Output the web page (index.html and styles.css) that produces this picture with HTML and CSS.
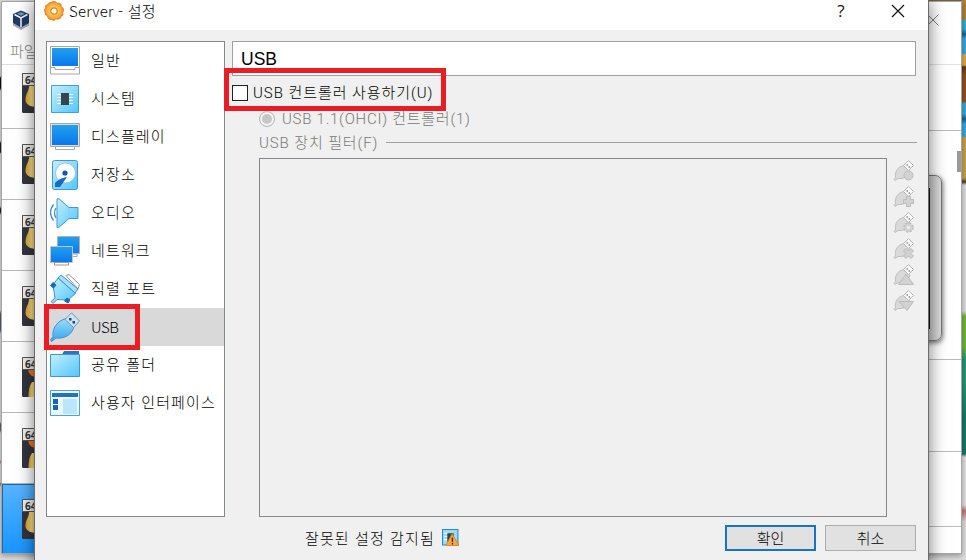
FILE: index.html
```html
<!DOCTYPE html>
<html lang="ko">
<head>
<meta charset="utf-8">
<title>Server - 설정</title>
<link rel="stylesheet" href="styles.css">
</head>
<body>
<svg class="defs" width="0" height="0">
  <defs>
    <linearGradient id="screen" x1="0" y1="0" x2="0" y2="1"><stop stop-color="#22a0ec"/><stop offset="1" stop-color="#0878ec"/></linearGradient>
    <linearGradient id="sky" x1="0" y1="0" x2="1" y2="1"><stop stop-color="#c4efff"/><stop offset="1" stop-color="#52c6fb"/></linearGradient>
    <linearGradient id="deep" x1="0" y1="0" x2="0" y2="1"><stop stop-color="#9cdcfa"/><stop offset="1" stop-color="#35a5ef"/></linearGradient>
    <linearGradient id="gold" x1="0" y1="0" x2="1" y2="0"><stop stop-color="#dca030"/><stop offset=".5" stop-color="#fbdf85"/><stop offset="1" stop-color="#efc04e"/></linearGradient>
    <radialGradient id="gear"><stop stop-color="#ffe98a"/><stop offset=".7" stop-color="#fbb03c"/><stop offset="1" stop-color="#ea8024"/></radialGradient>
    <symbol id="vm" viewBox="0 0 40 40">
      <rect width="40" height="40" rx="1.5" fill="#33363f"/><path d="M.5 12.500V.5H40v12z" fill="#f2f2f2" stroke="#555"/>
      <path d="M7 13c0 5-3 7-3.500 13-.5 5 4 8 12 8V13z" fill="url(#gold)"/>
    </symbol>
    <symbol id="vm2" viewBox="0 0 40 40">
      <rect width="40" height="40" rx="1.500" fill="#33363f"/><path d="M.5 12.500V.5H40v12z" fill="#f2f2f2" stroke="#555"/>
      <path d="M6.500 13c0 4 3 7 8 7v-7z" fill="#ee7426"/><path d="M14 25h-4c-3 4-3.500 9-3.500 15H14z" fill="url(#gold)"/>
    </symbol>
    <symbol id="plug" viewBox="0 0 22 22">
      <path d="M1 19.500l1.500-2C1.500 11.500 5 6.500 11 5.500l6 6c-2 5-6 7.500-12 7l-3 2z" fill="#d9d9d9" stroke="#bfbfbf"/>
      <path d="M10.500 5.500l5-5 5 5-5 5z" fill="#fafafa" stroke="#b5b5b5"/><path d="M13.500 5h1.500M15.500 7H17" stroke="#888" stroke-width="1.300"/>
    </symbol>
  </defs>
</svg>

<div class="desktop">
  <div class="manager">
    <div class="manager-left">
      <div class="manager-head">
        <svg class="cube" viewBox="0 0 18 20"><path d="M1 4l8-3.500L17 4v9.500L9 19.500 1 13.500z" fill="#1d3b66"/><path d="M1 13l8 4.500 8-4.500v2.500L9 20l-8-4.500z" fill="#a9adb8"/><path d="M2.500 4.500L9 8l6.500-3.500M9 8v9" fill="none" stroke="#f3f7fb" stroke-width="1.500"/><path d="M5 3.800l4-1.700 4 1.700-4 2z" fill="#7192b9"/></svg>
        <span class="menu">파일</span>
      </div>
      <div class="vm-row first"><svg><use href="#vm"/></svg><b>64</b></div>
      <div class="vm-row"><svg><use href="#vm"/></svg><b>64</b></div>
      <div class="vm-row"><svg><use href="#vm"/></svg><b>64</b></div>
      <div class="vm-row"><svg><use href="#vm"/></svg><b>64</b></div>
      <div class="vm-row"><svg><use href="#vm2"/></svg><b>64</b></div>
      <div class="vm-row"><svg><use href="#vm2"/></svg><b>64</b></div>
      <div class="vm-row selected"><svg><use href="#vm"/></svg><b>64</b></div>
    </div>
    <div class="manager-right">
      <div class="pane caption"><svg viewBox="0 0 12 12"><path d="M.5.5l11 11M11.500.5l-11 11" stroke="#808080" fill="none"/></svg></div>
      <div class="pane tools"></div>
      <div class="pane preview"><div class="thumb"></div><div class="monitor"><i></i></div></div>
      <div class="pane info"></div>
      <div class="pane info2"></div>
      <div class="pane last"></div>
    </div>
  </div>

  <div class="dialog">
    <header class="titlebar">
      <svg class="gear" viewBox="0 0 20 20"><path d="M8 1l2-.7 2 .7 1 1.200 2.500-.2 1.500 1.500.2 2L19 7l.8 2.500-1 2 .2 2.500-2 1.500-.8 2-2.500.7-2-.1L10 19.700l-2-1.200-2.500.1L4 17l-.5-2L1.200 13.500 1 11 .2 9l1.300-2 .3-2.500L4 3.200l1.200-1.500z" fill="url(#gear)" stroke="#e0822c" stroke-width=".8"/><circle cx="10" cy="10" r="3.200" fill="#fff4dc" stroke="#d98224" stroke-width="1.200"/></svg>
      <span class="title">Server - 설정</span>
      <span class="help">?</span>
      <svg class="close" viewBox="0 0 14 14"><path d="M1 1l12 12M13 1L1 13" stroke="#111" stroke-width="1.200" fill="none"/></svg>
    </header>

    <div class="body">
      <nav class="sidebar">
        <div class="item"><svg viewBox="0 0 30 30"><path d="M.5.500h29V28h-29z" fill="#fff" stroke="#a5a8ad"/><path d="M2 2h26v18H2z" fill="url(#screen)"/><path d="M1 21.500h4v2h20v-2h4" fill="none" stroke="#a5a8ad"/></svg><span>일반</span></div>
        <div class="item"><svg viewBox="0 0 30 30"><path d="M1.500 1.500h27v27h-27z" fill="url(#sky)" stroke="#459fd4"/><path d="M7 10.500h16M7 13.500h16M7 16.500h16M7 19.500h16" stroke="#effaff"/><path d="M11 9h8v12h-8z" fill="#39424f"/></svg><span>시스템</span></div>
        <div class="item"><svg viewBox="0 0 30 30"><path d="M.5 1.500h29v23h-29z" fill="#ddd" stroke="#a5a8ad"/><path d="M2 3h26v20H2z" fill="url(#screen)"/><path d="M5.500 24.500h19v3h-19z" fill="#fff" stroke="#a5a8ad"/></svg><span>디스플레이</span></div>
        <div class="item"><svg viewBox="0 0 30 30"><rect x="2.500" y=".5" width="25" height="29" rx="2" fill="url(#sky)" stroke="#4296d4"/><circle cx="15.500" cy="13" r="10" fill="#fff" stroke="#8ccdf2"/><circle cx="15" cy="13" r="2.600" fill="#0e57b5"/><path d="M17 17l-7 10H5v-4c3-3 6-5 12-6z" fill="#176bc8"/></svg><span>저장소</span></div>
        <div class="item"><svg viewBox="0 0 30 30"><path d="M7 .8h2L19 9.500h9v11h-9L9 29.300H7z" fill="url(#sky)" stroke="#4296d4"/><path d="M19 10v10M25 10v10" stroke="#81cff5"/><path d="M3.500 6.500q-6 8 0 16M6 10q-3 5 0 10" fill="none" stroke="#468bcc" stroke-width="1.300"/></svg><span>오디오</span></div>
        <div class="item"><svg viewBox="0 0 30 30"><path d="M7.500.5h22v17h-22z" fill="url(#screen)" stroke="#aab3bd"/><path d="M23 18h4v2.500h-5" fill="#fff" stroke="#aaa"/><path d="M.5 10.500h22v16H.5z" fill="url(#screen)" stroke="#bdc6ce"/><path d="M4.500 26.500h14v2.500h-14z" fill="#fff" stroke="#999"/></svg><span>네트워크</span></div>
        <div class="item"><svg viewBox="0 0 30 30"><path d="M16 1.500l3-1 10.500 10-1.500 4.500z" fill="#fff" stroke="#8f8f98"/><path d="M8 4l3-3L28 15l-3 4z" fill="#a6dffb" stroke="#3e92d0"/><path d="M3 11l5-7 17.500 15.500L18 26l-11-.5-4 4-2-2L5 24z" fill="url(#sky)" stroke="#3e92d0"/><path d="M.5 11.500l2.500-3 3 2.500-2.500 3zM14.500 27l2.500-3 3 2-2 3z" fill="#1767c4" stroke="#1767c4"/></svg><span>직렬 포트</span></div>
        <div class="item active"><svg viewBox="0 0 30 30"><path d="M1.500 29.500l-1-2 2.500-3c-1-8 4-15.500 13-18l8 8c-2 8-9 12.500-18 11.500z" fill="url(#deep)" stroke="#3a92d4"/><path d="M15 7.500L21.500.8 29.500 9l-6 6.500z" fill="#c9e3f8" stroke="#7494b8"/><path d="M19 6h2.500v2.500H19zM22.500 9H25v2.500h-2.500z" fill="#2b4564"/></svg><span>USB</span></div>
        <div class="item"><svg viewBox="0 0 30 30"><path d="M11 6l3-5h15v6z" fill="#2c74c5"/><path d="M.5 4.500h29v22H.5z" fill="url(#sky)" stroke="#4296d4"/></svg><span>공유 폴더</span></div>
        <div class="item"><svg viewBox="0 0 30 30"><path d="M.5 2.500h29v25H.5z" fill="#e8f9ff" stroke="#4fa1d4"/><path d="M2 5h26v4H2z" fill="#2670c0"/><path d="M3 11h5v5H3zM3 17h5v5H3z" fill="#1962b5"/><path d="M13 11h14v15H13z" fill="#b9e6fa"/></svg><span>사용자 인터페이스</span></div>
      </nav>

      <main class="content">
        <h1 class="page-title">USB</h1>
        <label class="check"><i></i><span>USB 컨트롤러 사용하기(U)</span></label>
        <label class="radio"><i></i><span>USB 1.1(OHCI) 컨트롤러(1)</span></label>
        <div class="group"><span>USB 장치 필터(F)</span><hr></div>
        <div class="filters">
          <div class="list"></div>
          <div class="tools-col">
            <svg viewBox="0 0 22 22"><use href="#plug"/><circle cx="15.500" cy="15.500" r="4.500" fill="#d2d2d2" stroke="#bbb"/></svg>
            <svg viewBox="0 0 22 22"><use href="#plug"/><path d="M13.500 10.500h4v3h3v4h-3v3h-4v-3h-3v-4h3z" fill="#d2d2d2" stroke="#bbb"/></svg>
            <svg viewBox="0 0 22 22"><use href="#plug"/><circle cx="15.500" cy="15.500" r="4" fill="#d2d2d2" stroke="#bbb" stroke-width="2.500" stroke-dasharray="2 1.140"/><circle cx="15.500" cy="15.500" r="3.800" fill="#d2d2d2"/><circle cx="15.500" cy="15.500" r="1.500" fill="#f2f2f2"/></svg>
            <svg viewBox="0 0 22 22"><use href="#plug"/><path d="M10.500 13l2.500-2.500 2.500 2.500 2.500-2.500 2.500 2.500-2.500 2.500 2.500 2.500-2.500 2.500-2.500-2.500-2.500 2.500-2.500-2.500 2.500-2.500z" fill="#d2d2d2" stroke="#bbb"/></svg>
            <svg viewBox="0 0 22 22"><use href="#plug"/><path d="M13 10l7.500 10.500h-15z" fill="#d2d2d2" stroke="#bbb"/></svg>
            <svg viewBox="0 0 22 22"><use href="#plug"/><path d="M6 11.500h14.500L14 20.500z" fill="#d2d2d2" stroke="#bbb"/></svg>
          </div>
        </div>
      </main>
    </div>

    <footer class="footer">
      <span class="warning">잘못된 설정 감지됨</span>
      <svg class="warn-icon" viewBox="0 0 16 16"><path d="M.5.5h14.500v14.500H.5z" fill="#9adbf8" stroke="#2389d2"/><path d="M2 4h4M2 7h4M2 10h3" stroke="#fff"/><path d="M5 4h6v8H5z" fill="#354253"/><path d="M9.500 4.500L16 15.500H3.500z" fill="#fba936" stroke="#df7a17" stroke-width=".7"/><path d="M9.800 8v4M9.800 13v1.500" stroke="#3b2b13" stroke-width="1.300"/></svg>
      <button class="ok">확인</button>
      <button>취소</button>
    </footer>
  </div>
  <div class="mark mark-check"></div>
  <div class="mark mark-nav"></div>
</div>
</body>
</html>
```

FILE: styles.css
```css
* { box-sizing: border-box; }
body { margin: 0; overflow: hidden; font-family: "Noto Sans CJK KR", sans-serif; color: #111; }
svg { display: block; flex: none; }
.defs { position: absolute; }
.desktop {
  position: relative; width: 966px; height: 560px; overflow: hidden;
  background:
    linear-gradient(#b0813f 0 20px, #36a9dc 20px 29px, #245e80 34px, #36a9dc 39px 53px, #d8ab4a 55px 65px, #5b3820 67px, #8a5324 75px 101px, #36a9dc 104px 114px, #245e80 119px, #36a9dc 124px 136px, #c6a052 138px 178px, #50391f 182px, #ddd 185px 311px, #70b839 316px 346px, #259577 360px 384px, #18766a 420px 454px, #e0e0e0 457px 505px, #c77066 511px, #ddd 522px) 962px 0 / 4px 560px no-repeat,
    linear-gradient(#ddd 0 76px, #111 78px 88px, #ddd 91px 141px, #222 143px 152px, #ddd 154px 206px, #222 209px 212px, #ddd 215px 310px, #536078 314px 330px, #ddd 334px 422px, #666 424px 430px, #ddd 433px 460px, #b66 462px, #ddd 464px 482px, #b75c48 484px, #ddd 487px) 0 0 / 2px 560px no-repeat,
    linear-gradient(#84653f, #84653f) 928px 0 / 38px 2px no-repeat,
    #dedede;
}
.manager {
  position: absolute; left: 1px; top: 1px; width: 961px; height: 553px;
  display: flex; justify-content: space-between; background: #fff;
  border: 1px solid #a5a5a5; box-shadow: 0 2px 6px rgba(0,0,0,.35);
}
.manager-left { width: 34px; overflow: hidden; }
.manager-head { height: 63px; border-bottom: 1px solid #ddd; padding: 8px 0 0 8px; overflow: hidden; }
.cube { width: 20px; height: 20px; margin-left: 1px; }
.menu { display: block; width: 60px; font-size: 15px; font-weight: 300; line-height: 20px; margin-top: 11px; color: #858585; }
.vm-row { position: relative; height: 71px; padding: 15px 0 0 20px; border-bottom: 1px solid #b8b8b8; }
.vm-row.first { height: 64px; padding-top: 8px; }
.vm-row svg { width: 40px; height: 40px; }
.vm-row b { display: block; width: 20px; margin: -39px 0 0 3px; font: bold 10px/12px "Noto Sans", sans-serif; position: relative; color: #333; }
.vm-row.selected { height: 71px; background: linear-gradient(#57b4ff, #1596ff); border: 1px solid #1669b0; padding-left: 19px; padding-top: 14px; }
.manager-right { width: 40px; overflow: hidden; }
.pane { border-bottom: 1px solid #bbb; }
.caption { height: 63px; border-color: #e2e2e2; padding: 12px 0 0 6px; }
.caption svg { width: 12px; height: 12px; }
.tools { height: 66px; }
.preview { height: 229px; padding-top: 20px; }
.thumb { width: 4px; height: 21px; margin-left: 36px; background: #999; }
.monitor { width: 30px; height: 166px; margin: 3px 0 0 -9px; padding: 12px 11px; border: 1px solid #777; border-radius: 7px; background: linear-gradient(90deg, #aaa, #ddd); box-shadow: 1px 2px 5px rgba(0,0,0,.55); }
.monitor i { display: block; height: 141px; background: #111; width: 8px; margin-left: -2px; }
.info { height: 92px; }
.info2 { height: 75px; }
.last { border: 0; }

.dialog {
  position: absolute; left: 34px; top: -1px; width: 895px; height: 570px;
  background: #f0f0f0; border: 1px solid #6b6b6b; box-shadow: 0 2px 16px rgba(0,0,0,.55);
}
.titlebar { height: 30px; display: flex; background: #fff; padding-left: 9px; }
.gear { width: 20px; height: 20px; margin-top: 1px; }
.title { width: 767px; margin-left: 5px; font-size: 15px; font-weight: 300; line-height: 22px; letter-spacing: .2px; color: #000; }
.help { width: 12px; text-align: center; font: 17px/22px "Open Sans", sans-serif; margin-left: -1px; }
.close { width: 14px; height: 14px; margin: 4px 0 0 44px; }
.body { display: flex; gap: 7px; height: 487px; padding: 11px 11px 0; }
.sidebar { width: 179px; height: 476px; background: #fff; border: 1px solid #828790; }
.item { height: 38px; display: flex; align-items: center; font-size: 15px; font-weight: 300; letter-spacing: 1.15px; white-space: nowrap; color: #000; }
.item svg { width: 30px; height: 30px; margin: 0 11px 0 3px; }
.item span { line-height: 24px; padding-bottom: 2px; }
.item.active { background: #d9d9d9; letter-spacing: -.4px; }
.item.active span { padding-bottom: 0; }
.content { width: 685px; }
.page-title { width: 684px; height: 35px; margin: 0; padding-left: 8px; border: 1px solid #a0a0a0; background: #fff; font: 400 17.500px/34px "Liberation Sans", sans-serif; color: #000; }
.check, .radio, .group { display: flex; align-items: center; white-space: nowrap; font: 300 15px/22px Roboto, "Noto Sans CJK KR", sans-serif; }
.check { height: 26px; margin-top: 3px; padding-top: 2px; letter-spacing: .95px; color: #000; }
.check i { width: 16px; height: 16px; border: 1px solid #222; background: #fff; margin-right: 5px; }
.radio { height: 26px; padding-left: 27px; color: #777; letter-spacing: .75px; margin-top: 1px; }
.radio i { width: 16px; height: 16px; border: 1px solid #bbb; border-radius: 50%; background: #c7c7c7; box-shadow: inset 0 0 0 2px #f5f5f5; margin-right: 7px; }
.group { height: 22px; padding-left: 27px; color: #777; margin-top: -1px; letter-spacing: .9px; }
.group span { width: 120px; padding-top: 1px; }
.group hr { flex: 1; border: 0; border-top: 1px solid #a0a0a0; margin: 0 0 0 7px; }
.filters { display: flex; margin: 5px 0 0 27px; gap: 6px; }
.list { width: 628px; height: 359px; border: 1px solid #828790; }
.tools-col { display: flex; flex-direction: column; gap: 4px; padding-top: 2px; }
.tools-col svg { width: 22px; height: 22px; }
.footer { display: flex; height: 41px; align-items: center; padding: 0 12px 0 270px; font-size: 15px; }
.warning { width: 129px; white-space: nowrap; font-weight: 300; letter-spacing: 1.1px; color: #000; }
.warn-icon { width: 17px; height: 17px; margin: 0 auto 0 8px; }
button { width: 91px; height: 26px; margin-left: 9px; padding: 0; background: #e1e1e1; border: 1px solid #adadad; font: 300 15px/22px "Noto Sans CJK KR", sans-serif; color: #000; }
button.ok { border: 2px solid #1774bd; }
.mark { position: absolute; border: 5px solid #ea1c24; }
.mark-check { left: 224px; top: 68px; width: 222px; height: 43px; }
.mark-nav { left: 44px; top: 304px; width: 96px; height: 46px; }
```
